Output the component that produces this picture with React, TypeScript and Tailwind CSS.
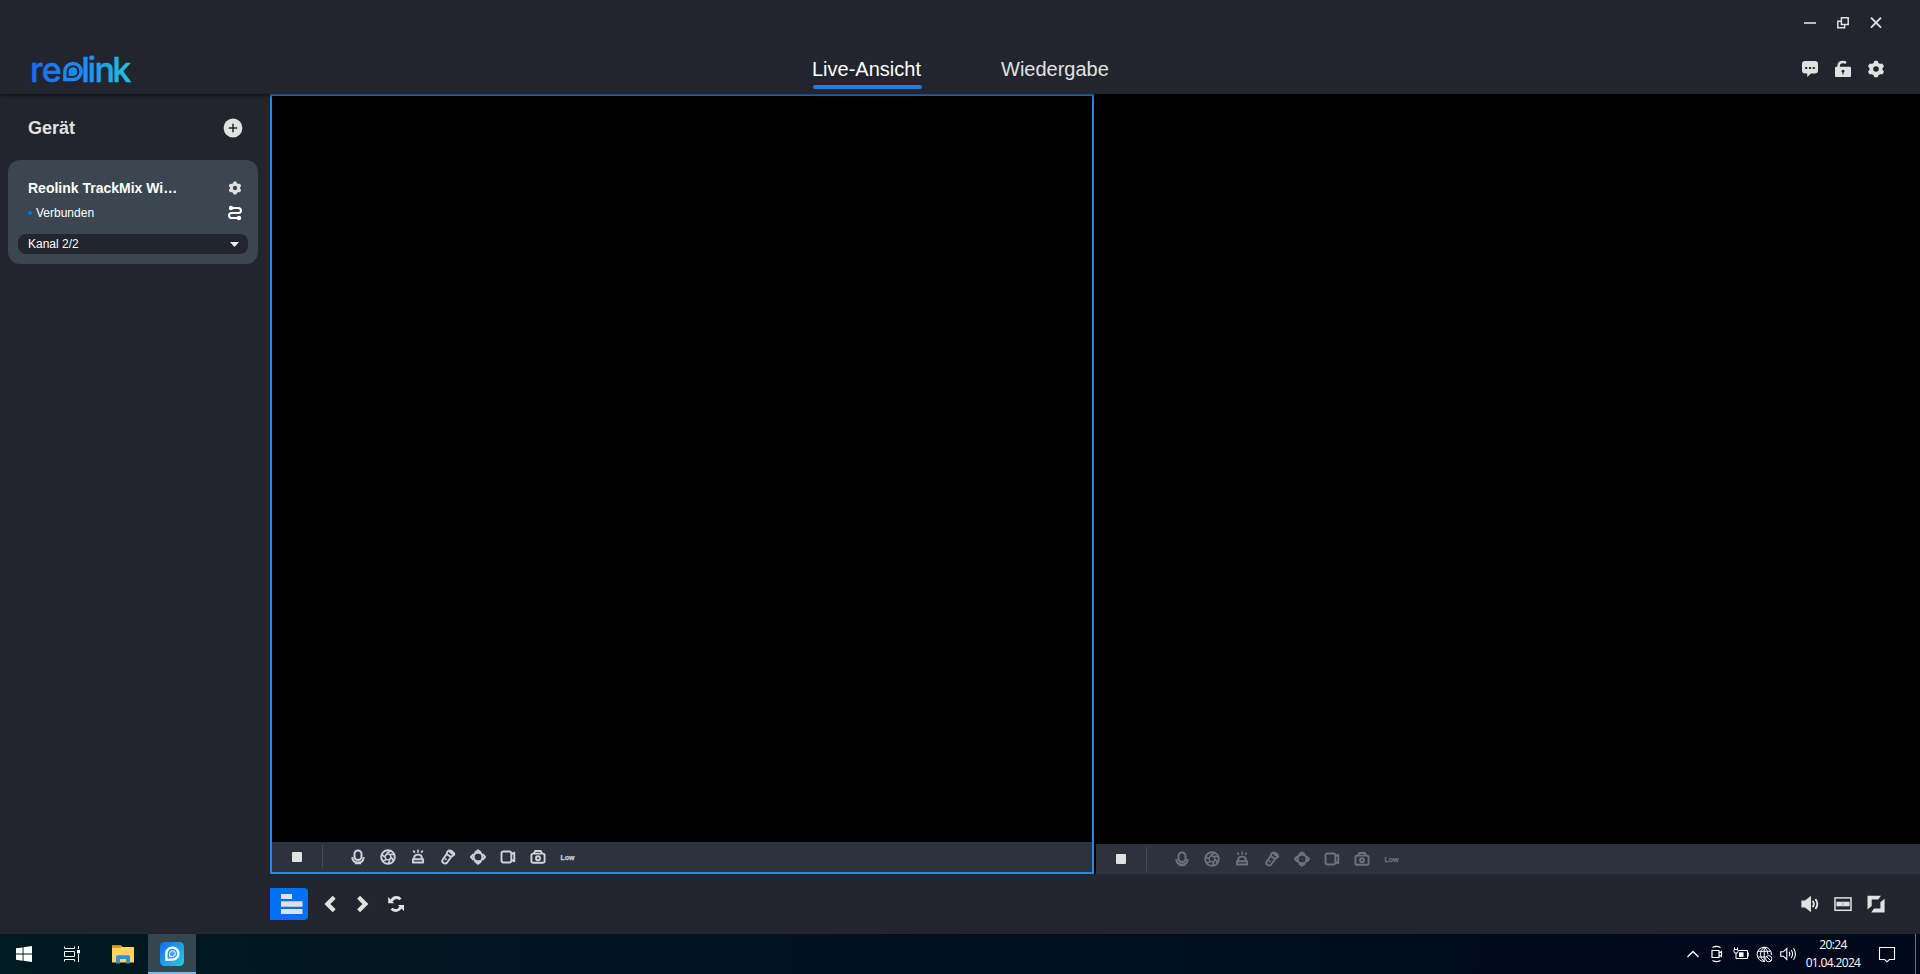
import type { ReactNode } from 'react';

type IconProps = { children: ReactNode; w?: number; h?: number; className?: string };

const Icon = ({ children, w = 18, h = 18, className = '' }: IconProps) => (
  <svg width={w} height={h} viewBox={`0 0 ${w} ${h}`} fill="none" className={`block shrink-0 ${className}`}>
    {children}
  </svg>
);

const Gear = ({ size = 18 }: { size?: number }) => (
  <svg width={size} height={size} viewBox="0 0 18 18" className="block shrink-0" fill="none" stroke="currentColor">
    <circle cx="9" cy="9" r="4.7" strokeWidth="3.8" />
    {[0, 60, 120, 180, 240, 300].map((a) => (
      <path key={a} d="M7.6 3 L7.9 1.6 H10.1 L10.4 3 Z" strokeWidth="1.8" strokeLinejoin="round" transform={`rotate(${a} 9 9)`} />
    ))}
  </svg>
);

const Logo = () => (
  <svg width="110" height="50" viewBox="-4 -12 110 50" className="block" aria-label="reolink">
    <defs>
      <linearGradient id="brand" gradientUnits="userSpaceOnUse" x1="0" y1="0" x2="100" y2="0">
        <stop offset="0" stopColor="#1c6cf5" />
        <stop offset=".5" stopColor="#1f8cf0" />
        <stop offset="1" stopColor="#1fc4dc" />
      </linearGradient>
    </defs>
    <g fill="url(#brand)" stroke="url(#brand)" strokeWidth=".4" fontFamily="Inter, sans-serif" fontSize="34" fontWeight="500">
      <text x="-2" y="27.5">r</text>
      <text x="9.8" y="27.5">e</text>
      <text x="49.2" y="27.5">l</text>
      <text x="55.4" y="27.5">i</text>
      <text x="62.4" y="27.5">n</text>
      <text x="80.2" y="27.5">k</text>
    </g>
    <path d="M32.9 25.6 V17.4 A8.1 8.1 0 1 1 41 25.6 Z" stroke="#1f86f1" strokeWidth="3.5" fill="none" />
    <path d="M36.6 22 V17.4 A4.4 4.4 0 1 1 41 22 Z" fill="#1f86f1" />
  </svg>
);

const toolIcons: { name: string; art: ReactNode }[] = [
  {
    name: 'talk',
    art: (
      <g stroke="currentColor" strokeWidth="2">
        <rect x="5.5" y="2.5" width="7" height="9.6" rx="3.5" />
        <path d="M3.3 9 Q3.5 14.6 9 14.6 Q14.5 14.6 14.7 9 M5.8 15.2 H12.2" />
      </g>
    ),
  },
  {
    name: 'fluent',
    art: (
      <g stroke="currentColor" strokeWidth="1.7">
        <circle cx="9" cy="9" r="6.8" strokeWidth="1.9" />
        <path d="M11 3 L7.4 6.2 M15 6.5 L10.8 6.4 M14.3 12.5 L12 9 M9.5 15.6 L10.9 11.4 M3.5 13 L7.4 11.8 M2.8 6.6 L6 9" />
        <circle cx="9" cy="9" r="2.8" strokeWidth="1.3" />
      </g>
    ),
  },
  {
    name: 'siren',
    art: (
      <g stroke="currentColor" strokeWidth="1.9" strokeLinejoin="round">
        <path d="M5.2 11 V9.4 Q5.4 6.6 9 6.6 Q12.6 6.6 12.8 9.4 V11 M3.9 11.3 H14.1 V14.5 H3.9 Z" />
        <path d="M9 1.6 V4.8 M4.2 2.6 L6 4.6 M13.8 2.6 L12 4.6" strokeWidth="1.6" />
      </g>
    ),
  },
  {
    name: 'flashlight',
    art: (
      <g stroke="currentColor" strokeWidth="1.9" strokeLinejoin="round">
        <path d="M8.6 3.4 Q10.5 1.7 13 3.2 Q15.4 4.7 15.2 6.8 L12.1 9 L8 14.8 Q6.5 16.2 4.5 15 Q2.7 13.8 3.4 12 L7.4 6.4 Z M8 6.2 L12 8.9 M10.6 3.6 L14.2 6.5" />
        <path d="M7.2 10.4 L6.2 12" />
      </g>
    ),
  },
  {
    name: 'ptz',
    art: (
      <g stroke="currentColor" strokeWidth="1.9" strokeLinejoin="round">
        <rect x="4.7" y="4.7" width="8.6" height="8.6" rx="3.6" />
        <path d="M5.8 4.7 L9 2.2 L12.2 4.7 M5.8 13.3 L9 15.8 L12.2 13.3 M4.5 6.2 L1.9 9 L4.5 11.8 M13.5 6.2 L16.1 9 L13.5 11.8" />
      </g>
    ),
  },
  {
    name: 'record',
    art: (
      <g stroke="currentColor" strokeWidth="1.9" strokeLinejoin="round">
        <rect x="2.5" y="3.5" width="9.8" height="11" rx="2" />
        <path d="M12.4 6.2 L15.3 4.7 V13.3 L12.4 11.8" />
      </g>
    ),
  },
  {
    name: 'snapshot',
    art: (
      <g stroke="currentColor" strokeWidth="1.9" strokeLinejoin="round">
        <rect x="2.4" y="5.6" width="13.2" height="9.2" rx="1.8" />
        <path d="M5 5.4 L6.2 3 H11.8 L13 5.4" />
        <circle cx="9" cy="10.2" r="2" />
      </g>
    ),
  },
];

const Toolbar = ({ active }: { active?: boolean }) => (
  <div className="flex h-[30px] w-full shrink-0 items-center bg-[#2d333c]">
    <div className="flex w-[50px] justify-center">
      <div className="size-[10px] rounded-[1px] bg-[#e1e1e1]" />
    </div>
    <div className="h-6 w-px bg-[#454857]" />
    <div className={`ml-5 flex items-center ${active ? 'text-[#ccd3db]' : 'text-[#6d737c]'}`}>
      {toolIcons.map((t) => (
        <button key={t.name} aria-label={t.name} className="flex h-[30px] w-[30px] items-center justify-center">
          <Icon w={18} h={18}>{t.art}</Icon>
        </button>
      ))}
      <span className="w-[29px] text-center text-[7px] font-bold leading-none [-webkit-text-stroke:0.25px_currentColor]">Low</span>
    </div>
  </div>
);

const HeaderIcons = () => (
  <div className="mt-[5px] flex gap-[15px] text-[#e1e1e1]">
    <Icon>
      <path d="M4 1 H14 Q17 1 17 4 V10.5 Q17 13.5 14 13.5 H10 L6.2 17 V13.5 H4 Q1 13.5 1 10.5 V4 Q1 1 4 1 Z" fill="currentColor" />
      <path d="M4.2 8 h2 M8 8 h2 M11.8 8 h2" stroke="#22252d" strokeWidth="2" />
    </Icon>
    <Icon>
      <path d="M4.6 7.5 V5.8 Q4.8 2.1 9 2.1 Q11 2.1 12 3" stroke="currentColor" strokeWidth="2.5" />
      <rect x="1" y="6.8" width="16" height="10.2" rx="1" fill="currentColor" />
      <circle cx="9" cy="11.2" r="1.4" fill="#22252d" />
      <path d="M9 11 V14.4" stroke="#22252d" strokeWidth="1.1" />
    </Icon>
    <Gear />
  </div>
);

const Sidebar = () => (
  <aside className="flex w-[270px] shrink-0 flex-col bg-[#22252d]">
    <div className="flex h-[66px] items-center pl-7 pr-[27px] pt-[2px]">
      <h2 className="flex-1 text-[18px] font-bold leading-none text-[#e1e1e1]">Gerät</h2>
      <Icon w={20} h={20}>
        <circle cx="10" cy="10" r="9.4" fill="#e1e1e1" />
        <path d="M5.8 10 H14.2 M10 5.8 V14.2" stroke="#22252d" strokeWidth="1.5" />
      </Icon>
    </div>
    <div className="ml-2 h-[104px] w-[250px] rounded-xl bg-[#3c4650] px-[10px] pt-5">
      <div className="flex h-4 items-center pl-[10px] pr-[6px] text-white">
        <span className="flex-1 text-[14px] font-bold leading-4">Reolink TrackMix Wi…</span>
        <span className="text-[#e1e1e1]"><Gear size={14} /></span>
      </div>
      <div className="mt-[9px] flex h-4 items-center pl-[10px] pr-[6px] text-white">
        <i className="size-1 rounded-full bg-[#0071f5]" />
        <span className="ml-1 flex-1 text-[12px] leading-4">Verbunden</span>
        <Icon w={14} h={16}>
          <path d="M3 3 H10 Q13 3 13 5.5 Q13 8 10 8 H4 Q1 8 1 10.4 Q1 13 4 13 H11" stroke="#fff" strokeWidth="2" />
          <circle cx="3" cy="3" r="2.2" fill="#fff" />
          <circle cx="11" cy="13" r="2.2" fill="#fff" />
        </Icon>
      </div>
      <div className="mt-[13px] flex h-5 items-center rounded-lg bg-[#22252d] pl-[10px] pr-[9px] text-white">
        <span className="flex-1 text-[12px] leading-4">Kanal 2/2</span>
        <Icon w={9} h={5}><path d="M0 0 H9 L4.5 5 Z" fill="#f0f0e8" /></Icon>
      </div>
    </div>
  </aside>
);

const Controls = () => (
  <div className="flex h-[60px] shrink-0 items-center bg-[#22252d] pr-[35px]">
    <div className="ml-[270px] flex h-8 w-[38px] items-center rounded-r bg-[#0071f5] pl-[11px]">
      <Icon w={22} h={20}>
        <path d="M0 0 H11 V5 H0 Z M0 7.3 H21.5 V12.7 H0 Z M0 15 H21.5 V20 H0 Z" fill="#e1e1e1" />
      </Icon>
    </div>
    <div className="ml-[13px] flex flex-1 gap-[15px]">
      <Icon>
        <path d="M13.2 2.3 L6.4 9 L13.2 15.7" stroke="#e1e1e1" strokeWidth="4.2" />
      </Icon>
      <Icon>
        <path d="M4.6 2.3 L11.4 9 L4.6 15.7" stroke="#e1e1e1" strokeWidth="4.2" />
      </Icon>
      <Icon>
        <path d="M4.5 6 Q6 2.5 9.5 2.5 Q12 2.5 13.4 4.3 M13.7 12 Q12 15.5 8.6 15.5 Q6 15.5 4.6 13.7" stroke="#e1e1e1" strokeWidth="2.8" />
        <path d="M1.2 2 V8.3 H7.2 Z M17 16 V9.9 H10.8 Z" fill="#e1e1e1" />
      </Icon>
    </div>
    <div className="flex gap-[15px]">
      <Icon>
        <path d="M.4 5.4 H4 L10 .8 V17.2 L4 12.6 H.4 Z" fill="#e1e1e1" />
        <path d="M11.6 5.8 Q14.1 9 11.6 12.2 M14.4 4 Q18.2 9 14.4 14" stroke="#e1e1e1" strokeWidth="1.9" />
      </Icon>
      <Icon>
        <rect x="1" y="2.9" width="16" height="12.4" stroke="#e1e1e1" strokeWidth="1.5" />
        <path d="M2.4 6.7 H15.6 V11.3 H2.4 Z" fill="#e1e1e1" />
        <path d="M9 6.7 V11.3" stroke="#a9abae" strokeWidth="1" />
      </Icon>
      <Icon>
        <path d="M.5 .8 H14 L11.3 4.6 H4.7 V11 L.5 14.4 Z M17.6 3.8 V17.4 H4.2 L7 13.5 H13.4 V7.2 Z" fill="#e1e1e1" />
      </Icon>
    </div>
  </div>
);

const Taskbar = () => (
  <footer className="flex h-10 shrink-0 items-center bg-linear-to-r from-[#001a21] to-[#00081b]">
    <div className="flex w-12 justify-center">
      <Icon w={16} h={16}>
        <path d="M0 2.3 L6.6 1.4 V7.6 H0 Z M7.5 1.2 L16 0 V7.6 H7.5 Z M0 8.5 H6.6 V14.7 L0 13.8 Z M7.5 8.5 H16 V16 L7.5 14.8 Z" fill="#fff" />
      </Icon>
    </div>
    <div className="flex w-12 justify-center">
      <Icon w={16} h={16}>
        <path d="M.5 .5 V2.5 H10.5 V.5 M.5 15.5 V13.5 H10.5 V15.5 M.5 5.5 H10.5 V10.5 H.5 Z M14.5 0 V3 M14.5 8 V16" stroke="#fff" />
        <rect x="13" y="4" width="3" height="3.4" fill="#fff" />
      </Icon>
    </div>
    <div className="flex w-[52px] justify-center pl-px">
      <Icon w={22} h={19}>
        <path d="M0 .5 H9 L10.5 2 H22 V17.5 H0 Z" fill="#fcd45f" />
        <path d="M0 .5 H9 V3 H0 Z" fill="#e29d08" />
        <path d="M4 18.5 V12 Q4 10.2 5.5 10.2 H16.5 Q18 10.2 18 12 V18.5 H14 V14 H8 V18.5 Z" fill="#348dd8" />
      </Icon>
    </div>
    <div className="flex h-10 w-12 items-start justify-center border-b-2 border-[#76b9ed] bg-[#34464e] pt-2">
      <svg width="24" height="24" viewBox="0 0 24 24" className="block">
        <defs>
          <linearGradient id="tile" x1="0" y1="0" x2="1" y2="1">
            <stop offset="0" stopColor="#1868f5" />
            <stop offset="1" stopColor="#20d4dc" />
          </linearGradient>
        </defs>
        <rect width="24" height="24" rx="4.5" fill="url(#tile)" />
        <path d="M6.4 17.6 V11.4 A6 6 0 1 1 12.4 17.6 Z" stroke="#fff" strokeWidth="2.4" fill="none" />
        <path d="M9.6 14.5 V11.5 A2.9 2.9 0 1 1 12.5 14.5 Z" fill="#fff" fillOpacity=".15" stroke="#fff" strokeWidth="1" />
      </svg>
    </div>
    <div className="flex-1" />
    <div className="flex items-center gap-[7px]">
      <Icon w={16} h={16}><path d="M2.5 11 L8 5.5 L13.5 11" stroke="#fff" strokeWidth="1.3" /></Icon>
      <Icon w={18} h={18}>
        <path d="M4 5.5 H11 V12.5 H4 Z M11 8 L13.5 6.5 V11.5 L11 10 M4.5 2.5 Q8.5 .2 12.5 2.5 M4.5 15.5 Q8.5 17.8 12.5 15.5" stroke="#fff" strokeWidth="1.2" />
      </Icon>
      <Icon w={16} h={16}>
        <path d="M5.5 4.5 H14.5 V12.5 H5.5 M14.5 7 H15.8 V10 H14.5 M1.5 1.5 V4 M4.5 1.5 V4 M3 6.5 V12.5 H6" stroke="#fff" />
        <path d="M1 3.5 H5 V5.5 Q5 7.3 3 7.3 Q1 7.3 1 5.5 Z" stroke="#fff" />
        <rect x="6" y="6.3" width="4.5" height="4.6" fill="#fff" />
      </Icon>
      <Icon w={17} h={17}>
        <path d="M9 15.5 A7.2 7.2 0 1 1 15.4 9 M8.2 1 Q4.4 4 4.4 8.2 Q4.4 12.5 8.2 15.5 M8.2 1 Q12 4 12 8.5 M8.2 1 V15.5 M1.8 5.3 H14.6 M1.8 11 H9.5" stroke="#fff" />
        <circle cx="12.7" cy="12.7" r="3.1" stroke="#fff" />
        <path d="M10.6 10.6 L14.8 14.8" stroke="#fff" />
      </Icon>
      <Icon w={17} h={16}>
        <path d="M.7 5.8 H3.3 L6.8 2.5 V13.5 L3.3 10.2 H.7 Z M9 5.8 Q10.6 8 9 10.2 M11.2 4 Q14 8 11.2 12 M13.5 2.3 Q17.4 8 13.5 13.7" stroke="#fff" strokeWidth="1.1" />
      </Icon>
    </div>
    <div className="ml-[7px] w-[58px] text-center font-['Open_Sans',sans-serif] text-[12px] leading-[18px] tracking-[-0.65px] text-white">
      <div>20:24</div>
      <div>01.04.2024</div>
    </div>
    <div className="ml-4 w-[37px]">
      <Icon w={18} h={18}>
        <path d="M1.5 2.5 H16.5 V14.5 H11.3 L9 16.8 L6.7 14.5 H1.5 Z" stroke="#fff" strokeWidth="1.1" />
      </Icon>
    </div>
    <div className="mr-1 h-10 w-px bg-[#6d747c]" />
  </footer>
);

export default function App() {
  return (
    <div className="flex h-[974px] w-[1920px] flex-col overflow-hidden bg-[#22252d] font-['Liberation_Sans',Arial,sans-serif]">
      <header className="relative z-10 flex h-[94px] shrink-0 bg-[#22252d] shadow-[0_1px_4px_rgba(0,0,0,0.7)]">
        <div className="w-[812px] pl-7 pt-[42px]"><Logo /></div>
        <nav className="flex flex-1 items-start gap-20 pt-14 text-[20px] leading-[26px] tracking-normal">
          <a className="flex w-[109px] flex-col whitespace-nowrap text-white">
            Live-Ansicht
            <span className="ml-px mt-[3px] h-1 w-[109px] rounded-full bg-[#1c7df5]" />
          </a>
          <a className="text-[#e1e1e1]">Wiedergabe</a>
        </nav>
        <div className="flex w-[119px] flex-col pt-[14px]">
          <div className="mb-[23px] flex gap-[15px]">
            <Icon><path d="M3 9 H15" stroke="#e1e1e1" strokeWidth="1.6" /></Icon>
            <Icon><path d="M7.4 3.8 H14.2 V10.6 H7.4 Z M7.4 7.2 H3.8 V13.8 H10.6 V10.6" stroke="#e1e1e1" strokeWidth="1.5" /></Icon>
            <Icon><path d="M4 3.7 L14 13.7 M14 3.7 L4 13.7" stroke="#e1e1e1" strokeWidth="1.9" /></Icon>
          </div>
          <HeaderIcons />
        </div>
      </header>
      <div className="flex h-[780px] shrink-0">
        <Sidebar />
        <main className="grid flex-1 grid-cols-[824px_1fr] bg-black">
          <section className="flex flex-col border-2 border-[#2189ea] bg-black">
            <div className="flex-1" />
            <Toolbar active />
          </section>
          <section className="flex flex-col bg-black pl-[2px]">
            <div className="flex-1" />
            <Toolbar />
          </section>
        </main>
      </div>
      <Controls />
      <Taskbar />
    </div>
  );
}
